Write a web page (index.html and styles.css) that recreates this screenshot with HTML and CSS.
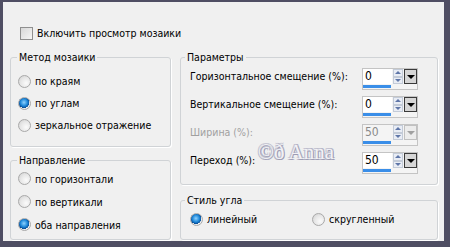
FILE: index.html
```html
<!DOCTYPE html>
<html lang="ru">
<head>
  <meta charset="UTF-8">
  <title>Мозаика</title>
  <link rel="stylesheet" href="styles.css">
</head>
<body>

  <div class="dialog">
    <label class="check-row"><span class="checkbox"></span>Включить просмотр мозаики</label>

    <div class="columns">
      <div class="col">
        <fieldset class="group group-method">
          <legend>Метод мозаики</legend>
          <div class="radio-row"><span class="radio"></span>по краям</div>
          <div class="radio-row"><span class="radio checked"></span>по углам</div>
          <div class="radio-row"><span class="radio"></span>зеркальное отражение</div>
        </fieldset>

        <fieldset class="group group-direction">
          <legend>Направление</legend>
          <div class="radio-row"><span class="radio"></span>по горизонтали</div>
          <div class="radio-row"><span class="radio"></span>по вертикали</div>
          <div class="radio-row"><span class="radio checked"></span>оба направления</div>
        </fieldset>
      </div>

      <div class="col">
        <fieldset class="group group-params">
          <legend>Параметры</legend>
          <div class="param-row">
            <span class="param-label">Горизонтальное смещение (%):</span>
            <div class="spin">
              <div class="spin-top">
                <span class="spin-field">0</span>
                <span class="spin-arrows"><i class="up"></i><i class="down"></i></span>
                <span class="spin-drop"></span>
              </div>
              <span class="spin-bar"></span>
            </div>
          </div>
          <div class="param-row">
            <span class="param-label">Вертикальное смещение (%):</span>
            <div class="spin">
              <div class="spin-top">
                <span class="spin-field">0</span>
                <span class="spin-arrows"><i class="up"></i><i class="down"></i></span>
                <span class="spin-drop"></span>
              </div>
              <span class="spin-bar"></span>
            </div>
          </div>
          <div class="param-row disabled">
            <span class="param-label">Ширина (%):</span>
            <div class="spin">
              <div class="spin-top">
                <span class="spin-field">50</span>
                <span class="spin-arrows"><i class="up"></i><i class="down"></i></span>
                <span class="spin-drop"></span>
              </div>
              <span class="spin-bar"></span>
            </div>
          </div>
          <div class="param-row">
            <span class="param-label">Переход (%):</span>
            <div class="spin">
              <div class="spin-top">
                <span class="spin-field">50</span>
                <span class="spin-arrows"><i class="up"></i><i class="down"></i></span>
                <span class="spin-drop"></span>
              </div>
              <span class="spin-bar"></span>
            </div>
          </div>
        </fieldset>

        <fieldset class="group group-corner">
          <legend>Стиль угла</legend>
          <div class="corner-row">
            <div class="radio-row"><span class="radio checked"></span>линейный</div>
            <div class="radio-row"><span class="radio"></span>скругленный</div>
          </div>
        </fieldset>
      </div>
    </div>

    <!-- watermark over the panel -->
    <div class="watermark">©ð Anna</div>
  </div>

</body>
</html>
```

FILE: styles.css
```css
body {
  margin: 0;
  background: #4f4e63;
  font-family: "DejaVu Sans Condensed", "Liberation Sans", Arial, sans-serif;
  font-size: 10.5px;
  color: #000;
}
.dialog {
  position: relative;
  box-sizing: border-box;
  margin: 2px 6px 0 3px;
  width: 441px;
  height: 239px;
  padding: 24px 0 0 7px;
  background: #f0f0f0;
  white-space: nowrap;
}

/* checkbox */
.check-row {
  display: flex;
  align-items: center;
  height: 14px;
  margin-left: 10px;
}
.checkbox {
  box-sizing: border-box;
  width: 13px;
  height: 13px;
  margin-right: 4px;
  border: 1px solid #8f8f8f;
  background: linear-gradient(135deg, #d8d8d8, #f6f6f6);
}

.columns {
  display: flex;
  gap: 9px;
  margin-top: 10px;
}
.col {
  display: flex;
  flex-direction: column;
}

/* group boxes */
.group {
  margin: 0;
  padding: 0;
  border: 1px solid #d0d3d6;
  border-radius: 3px;
  box-shadow: 1px 1px 0 #fff;
}
.group legend {
  padding: 0 2px;
  margin-left: 6px;
  line-height: 14px;
}
.group-method {
  width: 161px;
  box-sizing: border-box;
  padding: 6px 0 10px;
}
.group-direction {
  width: 161px;
  box-sizing: border-box;
  margin-top: 6px;
  padding: 0 0 3px;
}
.group-direction .radio-row {
  height: 23px;
}
.group-params {
  width: 258px;
  box-sizing: border-box;
  padding: 4px 19px 4px 0;
}
.group-params legend,
.group-corner legend {
  margin-left: 4px;
}
.group-corner {
  width: 258px;
  box-sizing: border-box;
  margin-top: 8px;
  padding: 1px 0 9px;
}

/* radios */
.radio-row {
  display: flex;
  align-items: center;
  height: 22px;
  padding-left: 7px;
}
.radio {
  box-sizing: border-box;
  width: 13px;
  height: 13px;
  margin-right: 4px;
  border: 1px solid #a9a9a9;
  border-radius: 50%;
  background: radial-gradient(circle at 65% 65%, #fbfbfb 0, #e6e6e6 55%, #cdcdcd 100%);
}
.radio.checked {
  background:
    radial-gradient(circle at 45% 40%, #8fd3ff 0, #1c86d8 40%, #0b4f97 60%, transparent 62%),
    radial-gradient(circle at 65% 65%, #fbfbfb 0, #e6e6e6 55%, #cdcdcd 100%);
}
.corner-row {
  display: flex;
}
.corner-row .radio-row {
  padding-left: 9px;
}
.corner-row .radio-row + .radio-row {
  padding-left: 55px;
}

/* parameter rows */
.param-row {
  display: flex;
  justify-content: space-between;
  height: 28px;
}
.param-label {
  margin-left: 9px;
  padding-top: 1px;
  line-height: 14px;
}
.param-row.disabled .param-label {
  color: #a0a0a0;
}
.spin {
  box-sizing: border-box;
  width: 56px;
  height: 22px;
  border: 1px solid #c4c4c4;
  background: #f4f4f4;
}
.spin-top {
  display: flex;
  height: 15px;
}
.spin-field {
  width: 30px;
  padding-left: 2px;
  box-sizing: border-box;
  background: #fff;
  line-height: 15px;
  font-size: 12px;
}
.spin-arrows {
  display: flex;
  flex-direction: column;
  width: 10px;
  margin-left: 1px;
}
.spin-arrows i {
  flex: 1;
  position: relative;
  border: 1px solid #c3cbd8;
  background: #e9edf5;
}
.spin-arrows i::after {
  content: "";
  position: absolute;
  left: 1px;
  top: 1px;
  border-left: 3px solid transparent;
  border-right: 3px solid transparent;
}
.spin-arrows .up::after {
  border-bottom: 3px solid #5f76a8;
}
.spin-arrows .down::after {
  border-top: 3px solid #5f76a8;
}
.spin-drop {
  position: relative;
  box-sizing: border-box;
  width: 13px;
  margin-left: 1px;
  border: 1px solid #3a3a3a;
  background: #d6d6d6;
}
.spin-drop::after {
  content: "";
  position: absolute;
  left: 2px;
  top: 5px;
  border-left: 4px solid transparent;
  border-right: 4px solid transparent;
  border-top: 4px solid #000;
}
.spin-bar {
  display: block;
  width: 28px;
  height: 3px;
  margin-top: 1px;
  background: #3a8ee8;
}
.param-row.disabled .spin-field {
  color: #8a8a8a;
  background: #f4f4f4;
}
.param-row.disabled .spin-drop {
  border-color: #c0c0c0;
  background: #ececec;
}
.param-row.disabled .spin-drop::after {
  border-top-color: #a0a0a0;
}

.watermark {
  position: absolute;
  left: 255px;
  top: 138px;
  font-family: "Liberation Serif", serif;
  font-size: 21px;
  color: #f2f2f6;
  text-shadow: 1px 1px 0 #9d9db4, -1px -1px 0 #c4c4d2, 1px -1px 0 #b4b4c6, -1px 1px 0 #b4b4c6;
}
```
